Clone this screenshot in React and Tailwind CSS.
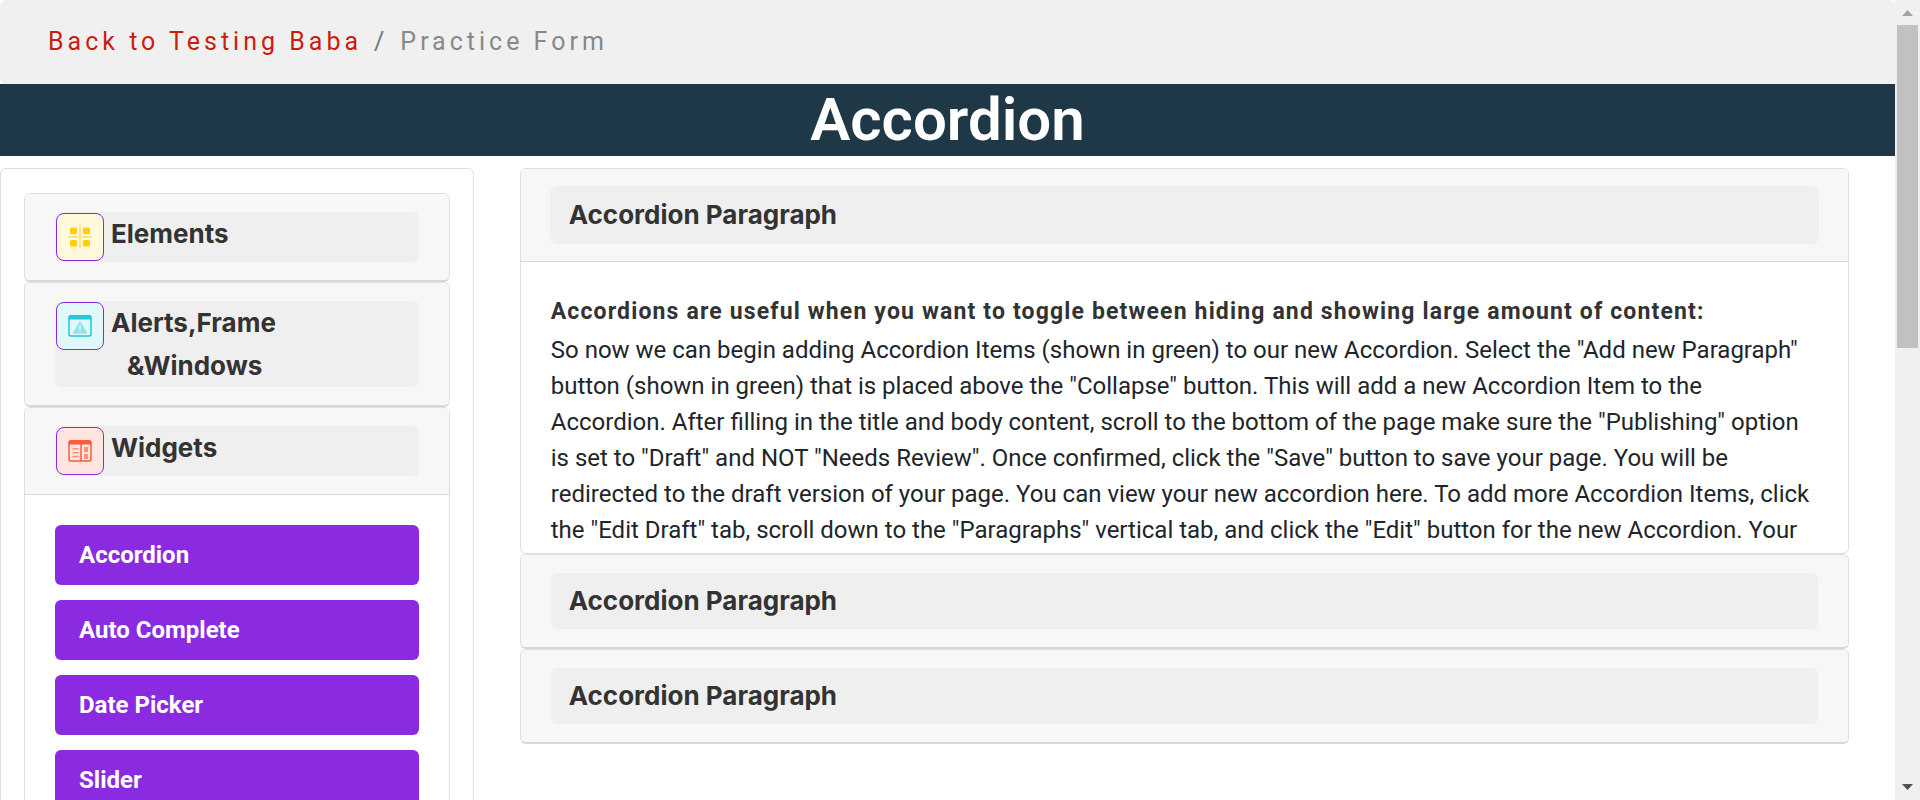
import { useState } from "react";

function ElementsIcon() {
  return (
    <svg viewBox="0 0 24 24" className="size-6" aria-hidden="true">
      <path d="M1 12h22M12 1v22" stroke="#ffe680" strokeWidth="2" strokeLinecap="round" />
      <g fill="#ffcf00">
        <rect x="2" y="2.5" width="7" height="6.5" rx="1.5" />
        <rect x="15" y="2.5" width="7" height="6.5" rx="1.5" />
        <rect x="2" y="15" width="7" height="6.5" rx="1.5" />
        <rect x="15" y="15" width="7" height="6.5" rx="1.5" />
      </g>
    </svg>
  );
}

function AlertsIcon() {
  return (
    <svg viewBox="0 0 24 24" className="size-6" aria-hidden="true">
      <rect x="1" y="2" width="22" height="20" rx="2" fill="#e0f7fb" stroke="#26c6da" strokeWidth="1.5" />
      <path d="M0.5 5.5V3.5a2.5 2.5 0 0 1 2.5-2.5h18a2.5 2.5 0 0 1 2.5 2.5V5.5z" fill="#26c6da" />
      <path d="M10.8 8.8q1.2-1.8 2.4 0l5.6 9.4q0.6 1.5-0.8 1.5H6q-1.4 0-0.8-1.5z" fill="#93e3ed" />
      <path d="M12 11.5v4M12 16.8v1.5" stroke="#e0f7fb" strokeWidth="1.5" />
    </svg>
  );
}

function WidgetsIcon() {
  return (
    <svg viewBox="0 0 24 24" className="size-6" aria-hidden="true">
      <rect x="1" y="2" width="22" height="20" rx="2" fill="#ffe5e0" stroke="#ff5a3c" strokeWidth="1.5" />
      <path d="M0.5 5.5V3.5a2.5 2.5 0 0 1 2.5-2.5h18a2.5 2.5 0 0 1 2.5 2.5V5.5z" fill="#ff5a3c" />
      <path d="M13 5v17" stroke="#ff5a3c" strokeWidth="1.5" />
      <path d="M5 9.8H10M5 13.8H10M5 17.5H10" stroke="#ff8f7a" strokeWidth="1.5" strokeLinecap="round" />
      <rect x="16" y="8" width="4" height="5" rx="0.5" fill="#ff8f7a" />
      <rect x="16" y="15" width="4" height="5" rx="0.5" fill="#ff8f7a" />
    </svg>
  );
}

function SideSection({ icon, tint, open, children, label, second }) {
  return (
    <section className={`overflow-hidden rounded-md border border-[#dfdfdf] ${open ? "" : "border-b-2 border-b-[#d8d8d8]"}`}>
      <h2 className={`bg-[#f7f7f7] px-[30px] py-[18px] ${open ? "border-b border-[#d8d8d8]" : ""}`}>
        <button type="button" aria-expanded={open} className="flex w-full items-start gap-1.5 rounded-md bg-[#efefef] text-left">
          <span className={`m-px flex size-12 shrink-0 items-center justify-center rounded-lg border border-[#8a2be2] ${tint}`}>{icon}</span>
          <span className="font-[Inter,sans-serif] text-[26px] leading-[43px] font-bold text-[#333]">
            {label}
            {second && <span className="block pl-4">{second}</span>}
          </span>
        </button>
      </h2>
      {children}
    </section>
  );
}

const links = ["Accordion", "Auto Complete", "Date Picker", "Slider"];

function Panel({ open, onToggle, children }) {
  return (
    <section className={`overflow-hidden rounded-md border border-[#dfdfdf] ${open ? "" : "border-b-2 border-b-[#d8d8d8]"}`}>
      <h2 className={`bg-[#f7f7f7] px-[30px] py-[18px] ${open ? "border-b border-[#d8d8d8]" : ""}`}>
        <button
          type="button"
          aria-expanded={open}
          onClick={onToggle}
          className={`block w-full rounded-md bg-[#efefef] px-[18px] py-2.5 text-left font-[Inter,sans-serif] text-[26px] leading-9 font-bold text-[#333] ${open ? "outline-1 outline-[#e8eff8]" : "outline-none"}`}
        >
          Accordion Paragraph
        </button>
      </h2>
      {open && children}
    </section>
  );
}

export default function App() {
  const [active, setActive] = useState(0);
  const toggle = (i) => setActive(active === i ? -1 : i);
  return (
    <div className="flex h-screen overflow-hidden bg-white font-[Roboto,sans-serif] text-2xl leading-9 text-[#212529]">
      <div className="min-w-0 flex-1 overflow-hidden">
        <nav aria-label="Breadcrumb" className="flex rounded-md bg-[#f0f0f0] px-12 py-6 text-[25px] leading-9 tracking-[4px] text-[#6c757d]">
          <a href="#home" className="text-[#cc1c0d]">Back to Testing Baba</a>
          <span className="px-3">/</span>
          <span className="text-[#888]">Practice Form</span>
        </nav>
        <h1 className="bg-[#1e3847] text-center text-6xl leading-[72px] font-semibold text-white">Accordion</h1>
        <div className="flex items-start pt-3">
          <aside className="w-1/4 shrink-0 rounded-md border border-[#dfdfe3] px-[23px] py-6">
            <SideSection icon={<ElementsIcon />} tint="bg-[#fff8dc]" label="Elements" open={false} />
            <SideSection icon={<AlertsIcon />} tint="bg-[#e0f7fb]" label="Alerts,Frame" second="&Windows" open={false} />
            <SideSection icon={<WidgetsIcon />} tint="bg-[#ffe5e0]" label="Widgets" open>
              <ul className="flex flex-col gap-[15px] p-[30px]">
                {links.map((l) => (
                  <li key={l}>
                    <a href={"#" + l.toLowerCase().replace(" ", "-")} className="block rounded-md bg-[#8a2be2] px-6 py-3 font-bold text-white">{l}</a>
                  </li>
                ))}
              </ul>
            </SideSection>
          </aside>
          <main className="min-w-0 flex-1 px-[46px]">
            <Panel open={active === 0} onToggle={() => toggle(0)}>
              <div className="px-[30px] pt-[30px] pb-[5px]">
                <p className="text-[23px] leading-10 font-bold tracking-wider text-[#333]">Accordions are useful when you want to toggle between hiding and showing large amount of content:</p>
                <p>
                  So now we can begin adding Accordion Items (shown in green) to our new Accordion. Select the "Add new Paragraph" button (shown in green) that is placed above the "Collapse" button. This will add a new Accordion Item to the Accordion. After filling in the title and body content, scroll to the bottom of the page make sure the "Publishing" option is set to "Draft" and NOT "Needs Review". Once confirmed, click the "Save" button to save your page. You will be redirected to the draft version of your page. You can view your new accordion here. To add more Accordion Items, click the "Edit Draft" tab, scroll down to the "Paragraphs" vertical tab, and click the "Edit" button for the new Accordion. Your
                </p>
              </div>
            </Panel>
            <Panel open={active === 1} onToggle={() => toggle(1)} />
            <Panel open={active === 2} onToggle={() => toggle(2)} />
          </main>
        </div>
      </div>
      <div className="flex w-[25px] shrink-0 flex-col items-center bg-[#f0f0f0]" aria-hidden="true">
        <svg viewBox="0 0 25 25" className="size-[25px]"><path d="M12.5 10l5.5 6h-11z" fill="#a3a3a3" /></svg>
        <div className="flex min-h-0 w-full flex-1 flex-col px-0.5"><div className="h-[43%] bg-[#c1c1c1]" /></div>
        <svg viewBox="0 0 25 25" className="size-[25px]"><path d="M7 9h11l-5.5 6z" fill="#505050" /></svg>
      </div>
    </div>
  );
}
